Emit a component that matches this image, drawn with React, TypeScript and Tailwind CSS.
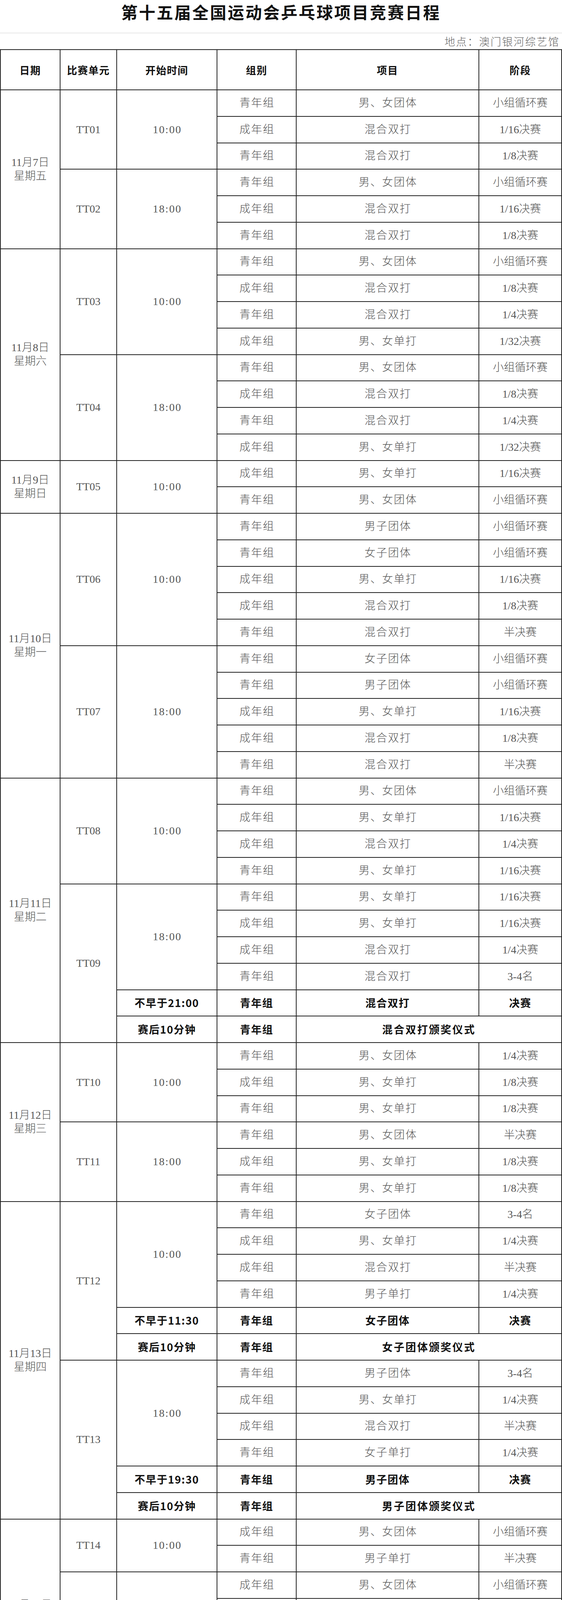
import React from 'react';

type R = [string, string, string];
type Unit = {
  code: string;
  time?: string;
  rows: R[];
  final?: { time: string; g: string; item: string; stage: string };
  cer?: { time: string; g: string; text: string };
};
type Day = { date: string; week: string; units: Unit[] };

const RS: Record<number, string> = {
  1: '',
  2: 'row-span-2',
  3: 'row-span-3',
  4: 'row-span-4',
  5: 'row-span-5',
  6: 'row-span-6',
  7: 'row-span-7',
  8: 'row-span-8',
  9: 'row-span-9',
  10: 'row-span-10',
  11: 'row-span-11',
  12: 'row-span-12',
};

const Q = '青年组';
const C = '成年组';

const days: Day[] = [
  {
    date: '11月7日',
    week: '星期五',
    units: [
      { code: 'TT01', time: '10:00', rows: [[Q, '男、女团体', '小组循环赛'], [C, '混合双打', '1/16决赛'], [Q, '混合双打', '1/8决赛']] },
      { code: 'TT02', time: '18:00', rows: [[Q, '男、女团体', '小组循环赛'], [C, '混合双打', '1/16决赛'], [Q, '混合双打', '1/8决赛']] },
    ],
  },
  {
    date: '11月8日',
    week: '星期六',
    units: [
      { code: 'TT03', time: '10:00', rows: [[Q, '男、女团体', '小组循环赛'], [C, '混合双打', '1/8决赛'], [Q, '混合双打', '1/4决赛'], [C, '男、女单打', '1/32决赛']] },
      { code: 'TT04', time: '18:00', rows: [[Q, '男、女团体', '小组循环赛'], [C, '混合双打', '1/8决赛'], [Q, '混合双打', '1/4决赛'], [C, '男、女单打', '1/32决赛']] },
    ],
  },
  {
    date: '11月9日',
    week: '星期日',
    units: [{ code: 'TT05', time: '10:00', rows: [[C, '男、女单打', '1/16决赛'], [Q, '男、女团体', '小组循环赛']] }],
  },
  {
    date: '11月10日',
    week: '星期一',
    units: [
      { code: 'TT06', time: '10:00', rows: [[Q, '男子团体', '小组循环赛'], [Q, '女子团体', '小组循环赛'], [C, '男、女单打', '1/16决赛'], [C, '混合双打', '1/8决赛'], [Q, '混合双打', '半决赛']] },
      { code: 'TT07', time: '18:00', rows: [[Q, '女子团体', '小组循环赛'], [Q, '男子团体', '小组循环赛'], [C, '男、女单打', '1/16决赛'], [C, '混合双打', '1/8决赛'], [Q, '混合双打', '半决赛']] },
    ],
  },
  {
    date: '11月11日',
    week: '星期二',
    units: [
      { code: 'TT08', time: '10:00', rows: [[Q, '男、女团体', '小组循环赛'], [C, '男、女单打', '1/16决赛'], [C, '混合双打', '1/4决赛'], [Q, '男、女单打', '1/16决赛']] },
      {
        code: 'TT09',
        time: '18:00',
        rows: [[Q, '男、女单打', '1/16决赛'], [C, '男、女单打', '1/16决赛'], [C, '混合双打', '1/4决赛'], [Q, '混合双打', '3-4名']],
        final: { time: '不早于21:00', g: Q, item: '混合双打', stage: '决赛' },
        cer: { time: '赛后10分钟', g: Q, text: '混合双打颁奖仪式' },
      },
    ],
  },
  {
    date: '11月12日',
    week: '星期三',
    units: [
      { code: 'TT10', time: '10:00', rows: [[Q, '男、女团体', '1/4决赛'], [C, '男、女单打', '1/8决赛'], [Q, '男、女单打', '1/8决赛']] },
      { code: 'TT11', time: '18:00', rows: [[Q, '男、女团体', '半决赛'], [C, '男、女单打', '1/8决赛'], [Q, '男、女单打', '1/8决赛']] },
    ],
  },
  {
    date: '11月13日',
    week: '星期四',
    units: [
      {
        code: 'TT12',
        time: '10:00',
        rows: [[Q, '女子团体', '3-4名'], [C, '男、女单打', '1/4决赛'], [C, '混合双打', '半决赛'], [Q, '男子单打', '1/4决赛']],
        final: { time: '不早于11:30', g: Q, item: '女子团体', stage: '决赛' },
        cer: { time: '赛后10分钟', g: Q, text: '女子团体颁奖仪式' },
      },
      {
        code: 'TT13',
        time: '18:00',
        rows: [[Q, '男子团体', '3-4名'], [C, '男、女单打', '1/4决赛'], [C, '混合双打', '半决赛'], [Q, '女子单打', '1/4决赛']],
        final: { time: '不早于19:30', g: Q, item: '男子团体', stage: '决赛' },
        cer: { time: '赛后10分钟', g: Q, text: '男子团体颁奖仪式' },
      },
    ],
  },
  {
    date: '11月14日',
    week: '星期五',
    units: [
      { code: 'TT14', time: '10:00', rows: [[C, '男、女团体', '小组循环赛'], [Q, '男子单打', '半决赛']] },
      {
        code: 'TT15',
        time: '18:00',
        rows: [[C, '男、女团体', '小组循环赛'], [Q, '女子单打', '半决赛'], [C, '混合双打', '3-4名']],
        final: { time: '不早于21:00', g: C, item: '混合双打', stage: '决赛' },
        cer: { time: '赛后10分钟', g: C, text: '混合双打颁奖仪式' },
      },
    ],
  },
  {
    date: '11月15日',
    week: '星期六',
    units: [
      {
        code: 'TT16',
        time: '10:00',
        rows: [[C, '男、女团体', '小组循环赛'], [C, '男子单打', '半决赛'], [Q, '男子单打', '3-4名']],
        final: { time: '不早于13:00', g: Q, item: '男子单打', stage: '决赛' },
        cer: { time: '赛后10分钟', g: Q, text: '男子单打颁奖仪式' },
      },
      {
        code: 'TT17',
        time: '18:00',
        rows: [[C, '男、女团体', '小组循环赛'], [C, '女子单打', '半决赛'], [Q, '女子单打', '3-4名']],
        final: { time: '不早于21:00', g: Q, item: '女子单打', stage: '决赛' },
        cer: { time: '赛后10分钟', g: Q, text: '女子单打颁奖仪式' },
      },
    ],
  },
  {
    date: '11月16日',
    week: '星期日',
    units: [
      {
        code: 'TT18',
        time: '10:00',
        rows: [[C, '男、女团体', '小组循环赛'], [C, '男子单打', '3-4名']],
        final: { time: '不早于12:30', g: C, item: '男子单打', stage: '决赛' },
        cer: { time: '赛后10分钟', g: C, text: '男子单打颁奖仪式' },
      },
      {
        code: 'TT19',
        time: '18:00',
        rows: [[C, '男、女团体', '小组循环赛'], [C, '女子单打', '3-4名']],
        final: { time: '不早于21:00', g: C, item: '女子单打', stage: '决赛' },
        cer: { time: '赛后10分钟', g: C, text: '女子单打颁奖仪式' },
      },
    ],
  },
  {
    date: '11月17日',
    week: '星期一',
    units: [
      { code: 'TT20', time: '10:00', rows: [[C, '男、女团体', '小组循环赛']] },
      { code: 'TT21', time: '18:00', rows: [[C, '男、女团体', '小组循环赛']] },
    ],
  },
  {
    date: '11月18日',
    week: '星期二',
    units: [
      { code: 'TT22', time: '10:00', rows: [[C, '男、女团体', '1/4决赛']] },
      { code: 'TT23', time: '18:00', rows: [[C, '男、女团体', '半决赛']] },
    ],
  },
  {
    date: '11月19日',
    week: '星期三',
    units: [
      { code: 'TT24', time: '10:00', rows: [[C, '女子团体', '3-4名']] },
      {
        code: 'TT25',
        rows: [],
        final: { time: '18:00', g: C, item: '女子团体', stage: '决赛' },
        cer: { time: '赛后10分钟', g: C, text: '女子团体颁奖仪式' },
      },
    ],
  },
  {
    date: '11月20日',
    week: '星期四',
    units: [
      { code: 'TT26', time: '10:00', rows: [[C, '男子团体', '3-4名']] },
      {
        code: 'TT27',
        rows: [],
        final: { time: '18:00', g: C, item: '男子团体', stage: '决赛' },
        cer: { time: '赛后10分钟', g: C, text: '男子团体颁奖仪式' },
      },
    ],
  },
];

const cell = 'relative flex items-center justify-center text-center border-r-2 border-b-2 border-[#222]';
const light = "font-['Liberation_Serif','Noto_Sans_CJK_SC',serif] font-light text-[28px] leading-[34px] text-[#555] whitespace-nowrap";
const lightT = 'tracking-[2px] pl-[2px]';
const bold = "font-['Liberation_Sans_Narrow','Noto_Sans_CJK_SC',sans-serif] font-bold text-[27px] leading-[34px] text-[#111] tracking-[1.5px] whitespace-nowrap";
const head = "font-['Noto_Sans_CJK_SC',sans-serif] font-bold text-[26px] text-[#111] tracking-[1.5px]";

const unitSize = (u: Unit) => u.rows.length + (u.final ? 1 : 0) + (u.cer ? 1 : 0);

const stripes: [number, number, number][] = [
  [3, 2, 0.7],
  [19, 2, 0.6],
  [44, 2, 0.75],
  [66, 2, 0.65],
  [83, 1.5, 0.5],
  [97, 2, 0.6],
  [107, 1.5, 0.55],
  [133, 2.5, 0.85],
  [147, 2, 0.7],
  [157, 2, 0.6],
  [174, 2.5, 0.9],
  [188, 2, 0.75],
  [205, 1.5, 0.5],
  [235, 2, 0.85],
  [245, 2, 0.9],
];

function Smear() {
  return (
    <svg className="absolute left-[223px] top-[4px]" width="440" height="60" viewBox="0 0 440 60">
      <defs>
        <linearGradient id="sg" x1="0" y1="0" x2="0" y2="1">
          <stop offset="0" stopColor="#222" stopOpacity="0.05" />
          <stop offset="0.6" stopColor="#222" stopOpacity="0.6" />
          <stop offset="1" stopColor="#111" stopOpacity="1" />
        </linearGradient>
        <linearGradient id="rg" x1="0" y1="0" x2="1" y2="0">
          <stop offset="0" stopColor="#e4e4e4" />
          <stop offset="1" stopColor="#f8f8f8" />
        </linearGradient>
      </defs>
      <rect x="0" y="0" width="440" height="60" fill="#ffffff" />
      <rect x="0" y="0" width="440" height="4" fill="#dcdcdc" />
      <rect x="247" y="4" width="190" height="26" fill="url(#rg)" opacity="0.6" />
      <path d="M420 14 q10 4 0 10 q10 6 0 12" stroke="#e0e0e0" strokeWidth="3" fill="none" />
      {stripes.map(([x, w, o], i) => (
        <rect key={i} x={x} y="6" width={w} height="54" fill="url(#sg)" opacity={o} />
      ))}
    </svg>
  );
}

export default function App() {
  const cells: React.ReactNode[] = [];
  let k = 0;
  const lastDay = days.length - 1;

  days.forEach((d, di) => {
    const total = d.units.reduce((s, u) => s + unitSize(u), 0);
    cells.push(
      <div key={k++} className={`${cell} ${RS[total]} flex-col ${light}`}>
        <span>{d.date}</span>
        <span className="mt-[1px]">{d.week}</span>
      </div>
    );
    d.units.forEach((u, ui) => {
      const isLastUnit = di === lastDay && ui === d.units.length - 1;
      cells.push(
        <div key={k++} className={`${cell} ${RS[unitSize(u)]} ${light}`}>
          {u.code}
        </div>
      );
      u.rows.forEach((r, i) => {
        if (i === 0) {
          cells.push(
            <div key={k++} className={`${cell} ${RS[u.rows.length]} ${light} ${lightT}`}>
              {u.time}
            </div>
          );
        }
        cells.push(
          <div key={k++} className={`${cell} ${light} ${lightT}`}>
            {r[0]}
          </div>
        );
        cells.push(
          <div key={k++} className={`${cell} ${light} ${lightT}`}>
            {r[1]}
          </div>
        );
        cells.push(
          <div key={k++} className={`${cell} ${light}`}>
            {r[2]}
          </div>
        );
      });
      if (u.final) {
        cells.push(
          <div key={k++} className={`${cell} ${bold}`}>
            {u.final.time}
          </div>
        );
        cells.push(
          <div key={k++} className={`${cell} ${bold}`}>
            {u.final.g}
          </div>
        );
        cells.push(
          <div key={k++} className={`${cell} ${bold}`}>
            {u.final.item}
          </div>
        );
        cells.push(
          <div key={k++} className={`${cell} ${bold}`}>
            {u.final.stage}
            {isLastUnit && (
              <div className="absolute left-[82px] top-[18px] h-[38px] w-[90px] rounded-[19px] border border-[#e2e2e2] bg-white/70 shadow-[0_1px_4px_rgba(0,0,0,0.08)]" />
            )}
          </div>
        );
      }
      if (u.cer) {
        cells.push(
          <div key={k++} className={`${cell} ${bold}`}>
            {u.cer.time}
          </div>
        );
        cells.push(
          <div key={k++} className={`${cell} ${bold}`}>
            {u.cer.g}
          </div>
        );
        cells.push(
          <div key={k++} className={`${cell} col-span-2 ${bold} tracking-[3px]`}>
            {u.cer.text}
            {isLastUnit && <Smear />}
          </div>
        );
      }
    });
  });

  return (
    <div className="w-[1440px] bg-white">
      <div className="flex h-[83px] justify-center pt-[8px]">
        <h1 className="font-['Noto_Sans_CJK_SC',sans-serif] text-[42px] font-semibold leading-[44px] tracking-[3.5px] text-[#111]">
          第十五届全国运动会乒乓球项目竞赛日程
        </h1>
      </div>
      <div className="h-[3px] bg-[#eeeeee]" />
      <div className="flex h-[40px] items-center justify-end pr-[6px]">
        <span className="font-['Noto_Sans_CJK_SC',sans-serif] font-light text-[27px] tracking-[2.5px] text-[#666]">
          地点：澳门银河综艺馆
        </span>
      </div>
      <div className="grid grid-cols-[153px_145px_257px_203px_468px_212px] grid-rows-[103px] auto-rows-[67.75px] border-t-2 border-l-2 border-[#222]">
        <div className={`${cell} ${head}`}>日期</div>
        <div className={`${cell} ${head}`}>比赛单元</div>
        <div className={`${cell} ${head}`}>开始时间</div>
        <div className={`${cell} ${head}`}>组别</div>
        <div className={`${cell} ${head}`}>项目</div>
        <div className={`${cell} ${head}`}>阶段</div>
        {cells}
      </div>
    </div>
  );
}
